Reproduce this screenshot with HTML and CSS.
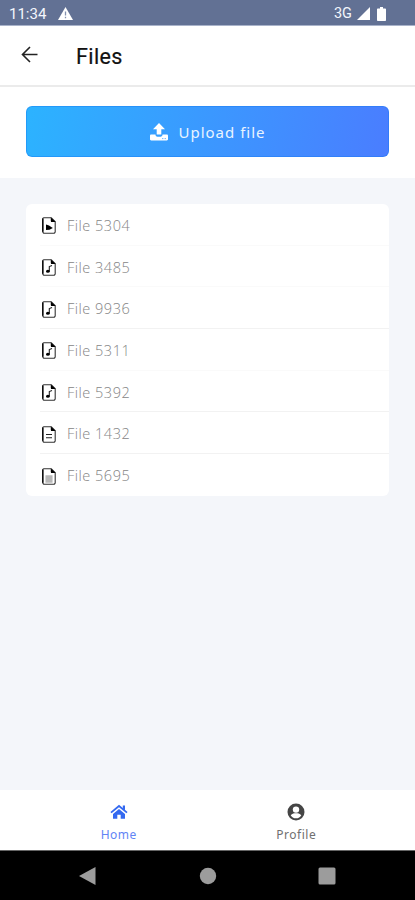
FILE: index.html
```html
<!DOCTYPE html>
<html lang="en">
<head>
<meta charset="utf-8">
<meta name="viewport" content="width=device-width">
<title>Files</title>
<link rel="stylesheet" href="styles.css">
</head>
<body>
<svg class="defs" aria-hidden="true">
  <symbol id="doc" viewBox="0 0 14 17">
    <path d="M1.700.8h7.600l3.900 4v9.900a1.500 1.500 0 0 1-1.500 1.500H2.300A1.500 1.500 0 0 1 .8 14.700V1.700A.9.9 0 0 1 1.700.8z" fill="none" stroke="#333" stroke-width="1.100"/>
    <path d="M.8 1.500v13.200" stroke="#000" stroke-width="1.300"/>
    <path d="M8.800.5l4.900 4.600H10a1.200 1.200 0 0 1-1.200-1.200z" fill="#000"/>
  </symbol>
  <symbol id="note" viewBox="0 0 14 17">
    <path d="M7.300 12V7.600L10 6.500" fill="none" stroke="#222" stroke-width="1.100"/>
    <ellipse cx="5.900" cy="12.200" rx="1.900" ry="1.500" fill="#000"/>
  </symbol>
</svg>
<div class="screen">
  <div class="status">
    <span class="time">11:34</span>
    <svg class="warn" viewBox="0 0 15 13"><path d="M7.500 0L15 13H0z" fill="#fff"/><path d="M7.500 4.500v4M7.500 9.700v1.500" stroke="#8290ae" stroke-width="1.300"/></svg>
    <span class="net">3G</span>
    <svg class="signal" viewBox="0 0 13 13"><path d="M13 0v13H0z" fill="#fff"/></svg>
    <svg class="battery" viewBox="0 0 9 14"><path d="M3 0h3v1.500h2.200a.8.8 0 0 1 .8.8v10.900a.8.8 0 0 1-.8.8H.8a.8.8 0 0 1-.8-.8V2.300a.8.8 0 0 1 .8-.8H3z" fill="#fff"/></svg>
  </div>
  <header class="header">
    <svg class="back" viewBox="0 0 17 17"><path d="M16.500 8.500H1.500M9 1L1.500 8.500 9 16" fill="none" stroke="#222" stroke-width="1.600"/></svg>
    <h1>Files</h1>
  </header>
  <section class="upload">
    <button class="button">
      <svg viewBox="0 0 18 18"><path d="M9 0l6 6.200h-3.700v5.300H6.700V6.200H3z" fill="#fff"/><path d="M1.200 11.500h4.300c0 1.400.7 2.200 1.900 2.200h3.200c1.200 0 1.900-.8 1.900-2.200h4.300c.7 0 1.200.5 1.200 1.200v3.600c0 .7-.5 1.200-1.200 1.200H1.200C.5 17.500 0 17 0 16.300v-3.600c0-.7.5-1.200 1.200-1.200z" fill="#fff"/><path d="M12.300 15.600h1M14.700 15.600h1" stroke="#3b9aff"/></svg>
      <span>Upload file</span>
    </button>
  </section>
  <main class="content">
    <ul class="files">
      <li class="faint"><svg viewBox="0 0 14 17"><use href="#doc"/><path d="M4 7.500l3 1 3.800 2.400-3.300 1.800L4 13z" fill="#000"/></svg><span>File 5304</span></li>
      <li class="faint"><svg viewBox="0 0 14 17"><use href="#doc"/><use href="#note"/></svg><span>File 3485</span></li>
      <li><svg viewBox="0 0 14 17"><use href="#doc"/><use href="#note"/></svg><span>File 9936</span></li>
      <li class="faint"><svg viewBox="0 0 14 17"><use href="#doc"/><use href="#note"/></svg><span>File 5311</span></li>
      <li><svg viewBox="0 0 14 17"><use href="#doc"/><use href="#note"/></svg><span>File 5392</span></li>
      <li><svg viewBox="0 0 14 17"><use href="#doc"/><path d="M4 8.500h6M4 11.700h6" stroke="#222" stroke-width="1.100"/></svg><span>File 1432</span></li>
      <li><svg viewBox="0 0 14 17"><use href="#doc"/><path d="M3.500 7.500h7v7h-7z" fill="#ccc"/><path d="M3.500 8h7M3.500 10h7M3.500 12h7M3.500 14h7" stroke="#888" stroke-width=".6"/></svg><span>File 5695</span></li>
    </ul>
  </main>
  <nav class="tabs">
    <a class="tab active">
      <svg viewBox="0 0 18 16"><path d="M1 8.600L9 2l8 6.600" fill="none" stroke="#3469f0" stroke-width="1.800"/><path d="M12.800 1.500h2.200v5l-2.200-2z" fill="#3469f0"/><path d="M9 5l6 5v4.800h-4.300v-4H7.300v4H3V10z" fill="#3469f0"/></svg>
      <span>Home</span>
    </a>
    <a class="tab">
      <svg viewBox="0 0 18 18"><circle cx="9" cy="9" r="8.500" fill="#454545"/><circle cx="9" cy="6.600" r="3.200" fill="#fff"/><path d="M3.700 12.200c1.500-1.600 3.400-1.900 5.300-1.900s3.800.3 5.300 1.900c-1 1.900-2.900 3.100-5.300 3.100s-4.300-1.200-5.300-3.100z" fill="#fff"/></svg>
      <span>Profile</span>
    </a>
  </nav>
  <div class="system">
    <svg viewBox="0 0 18 18"><path d="M16.500 0v18L0 9z" fill="#9c9c9c"/></svg>
    <svg viewBox="0 0 18 18"><circle cx="9" cy="9" r="8.200" fill="#9c9c9c"/></svg>
    <svg viewBox="0 0 18 18"><rect x=".5" y=".5" width="17" height="17" rx="1.500" fill="#9c9c9c"/></svg>
  </div>
</div>
</body>
</html>
```
FILE: styles.css
```css
* { box-sizing: border-box; }
body { margin: 0; font-family: Roboto, "Liberation Sans", sans-serif; }
svg { display: block; flex: none; }
.defs { display: none; }
.screen {
  width: 415px;
  height: 900px;
  display: flex;
  flex-direction: column;
  overflow: hidden;
  background: #f4f6fa;
}
.status {
  height: 26px;
  flex: none;
  display: flex;
  align-items: center;
  padding: 2px 29px 0 9px;
  background: #627194;
  border-bottom: 1px solid #a9b3ca;
  color: #f3f6fc;
  font-size: 15px;
}
.time { width: 49px; }
.warn { width: 15px; height: 13px; }
.net { margin-left: auto; font-size: 14.5px; font-weight: 400; }
.signal { width: 13px; height: 13px; margin-left: 5px; }
.battery { width: 9px; height: 14px; margin-left: 7px; }
.header {
  height: 61px;
  flex: none;
  display: flex;
  align-items: center;
  padding-left: 21px;
  background: #fff;
  border-bottom: 2px solid #ebebeb;
}
.back { width: 17px; height: 17px; margin-top: -3px; }
h1 {
  margin: 3px 0 0 38px;
  color: #111;
  font-size: 21.5px;
  font-weight: 400;
  line-height: 28px;
  letter-spacing: .4px;
  -webkit-text-stroke: .2px #111;
}
.upload { height: 91px; flex: none; padding: 19px 26px 0; background: #fff; }
.button {
  width: 363px;
  height: 51px;
  display: flex;
  align-items: center;
  justify-content: center;
  gap: 10px;
  padding: 0 0 0 1px;
  border: 1px solid rgba(20, 120, 240, .4);
  border-radius: 6px;
  background: linear-gradient(100deg, #2cb3ff, #4a7dff) border-box;
  color: #e9f4ff;
  font: 400 15px "Noto Sans", sans-serif;
  letter-spacing: 1px;
}
.button svg { width: 18px; height: 18px; }
.content { flex: 1; padding: 26px 26px 0; }
.files {
  margin: 0;
  padding: 0 0 0 14px;
  list-style: none;
  background: #fff;
  border-radius: 6px;
}
.files li {
  height: 41.7px;
  display: flex;
  align-items: center;
  gap: 11px;
  padding: 2px 0 0 2px;
  border-bottom: 1px solid #f2f2f2;
  color: #858585;
  font: 300 14.5px "Open Sans", sans-serif;
  letter-spacing: .5px;
}
.files li.faint { border-bottom-color: #fafafa; }
.files li:last-child { border-bottom: 0; }
.files svg { width: 14px; height: 17px; margin-top: 1px; }
.files span { margin-top: 0; }
.tabs {
  height: 60px;
  flex: none;
  display: flex;
  padding: 0 30px;
  background: #fff;
}
.tab {
  flex: 1;
  display: flex;
  flex-direction: column;
  align-items: center;
  padding-top: 13px;
  color: #707070;
  font: 400 12px/16px "Noto Sans", sans-serif;
  letter-spacing: .5px;
}
.tab svg { width: 18px; height: 18px; margin-bottom: 6px; }
.active { color: #6284f5; }
.system {
  height: 50px;
  flex: none;
  display: flex;
  align-items: center;
  justify-content: space-between;
  padding: 0 79px;
  background: #000;
  border-top: 1px solid #666;
}
.system svg { width: 18px; height: 18px; }
```
